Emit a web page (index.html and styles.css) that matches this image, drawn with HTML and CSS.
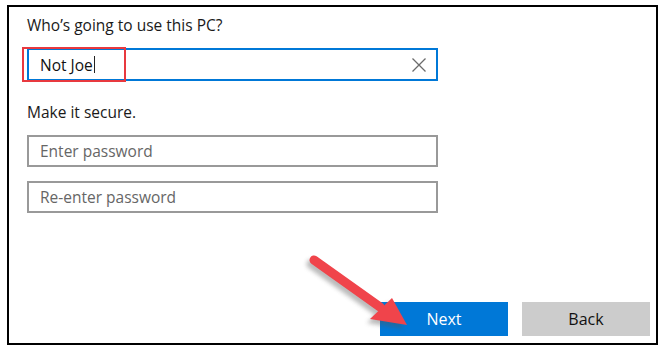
FILE: index.html
```html
<!DOCTYPE html>
<html>
<head>
<meta charset="utf-8">
<link rel="stylesheet" href="styles.css">
</head>
<body>
<div class="frame">
  <div class="title">Who’s going to use this PC?</div>
  <div class="field field-active">
    <span class="value">Not Joe</span><span class="caret"></span>
    <svg class="clear" width="16" height="16" viewBox="0 0 16 16"><path d="M1.5 1.5 L14.5 14.5 M14.5 1.5 L1.5 14.5" stroke="#6b6b6b" stroke-width="1.3" fill="none"/></svg>
    <div class="highlight"></div>
  </div>
  <div class="subtitle">Make it secure.</div>
  <div class="field field-pw"><span class="placeholder">Enter password</span></div>
  <div class="field field-pw field-pw2"><span class="placeholder">Re-enter password</span></div>
  <div class="buttons">
    <button class="btn btn-next">Next</button>
    <button class="btn btn-back">Back</button>
  </div>
  <svg class="arrow" width="130" height="100" viewBox="0 0 130 100">
    <defs>
      <filter id="sh" x="-20%" y="-20%" width="140%" height="140%">
        <feGaussianBlur stdDeviation="2"/>
      </filter>
    </defs>
    <g transform="translate(-3,4)" opacity="0.4" filter="url(#sh)">
      <line x1="24" y1="20" x2="90" y2="67" stroke="#555" stroke-width="9" stroke-linecap="round"/>
      <polygon points="102,58 80,79 117,85" fill="#555"/>
    </g>
    <line x1="24" y1="20" x2="90" y2="67" stroke="#f0444b" stroke-width="9" stroke-linecap="round"/>
    <polygon points="102,58 80,79 117,85" fill="#f0444b"/>
  </svg>
</div>
</body>
</html>
```
FILE: styles.css
```css
* { box-sizing: border-box; }
html, body { margin: 0; padding: 0; background: #fff; }
body {
  font-family: "Open Sans", "Noto Sans", "Liberation Sans", sans-serif;
  color: #1a1a1a;
}
.frame {
  position: relative;
  margin: 5px 0 0 7px;
  width: 651px;
  height: 340px;
  border: 2px solid #000;
  padding: 8px 6px 7px 18px;
  display: flex;
  flex-direction: column;
}
.title {
  font-size: 15.5px;
  line-height: 20px;
  margin-bottom: 13px;
}
.field {
  position: relative;
  width: 411px;
  height: 33px;
  display: flex;
  align-items: center;
  padding-left: 11px;
  font-size: 15.5px;
}
.field-active {
  border: 2px solid #0078d7;
}
.value { color: #111; }
.caret {
  display: inline-block;
  width: 1px;
  height: 17px;
  background: #222;
  margin-left: 1px;
}
.clear {
  position: absolute;
  right: 9px;
  top: 7px;
}
.highlight {
  position: absolute;
  left: -7px;
  top: -3px;
  width: 104px;
  height: 35px;
  border: 2px solid #e8393f;
}
.subtitle {
  font-size: 15.5px;
  line-height: 20px;
  margin-top: 21px;
  margin-bottom: 13px;
}
.field-pw {
  height: 32px;
  border: 2px solid #999;
}
.field-pw2 { margin-top: 14px; }
.placeholder { color: #666; }
.buttons {
  margin-top: auto;
  display: flex;
  justify-content: flex-end;
  gap: 14px;
}
.btn {
  width: 128px;
  height: 34px;
  border: none;
  font-family: inherit;
  font-size: 16px;
  padding: 0;
}
.btn-next { background: #0078d7; color: #fff; }
.btn-back { background: #cccccc; color: #111; }
.arrow {
  position: absolute;
  left: 281px;
  top: 233px;
}
```
